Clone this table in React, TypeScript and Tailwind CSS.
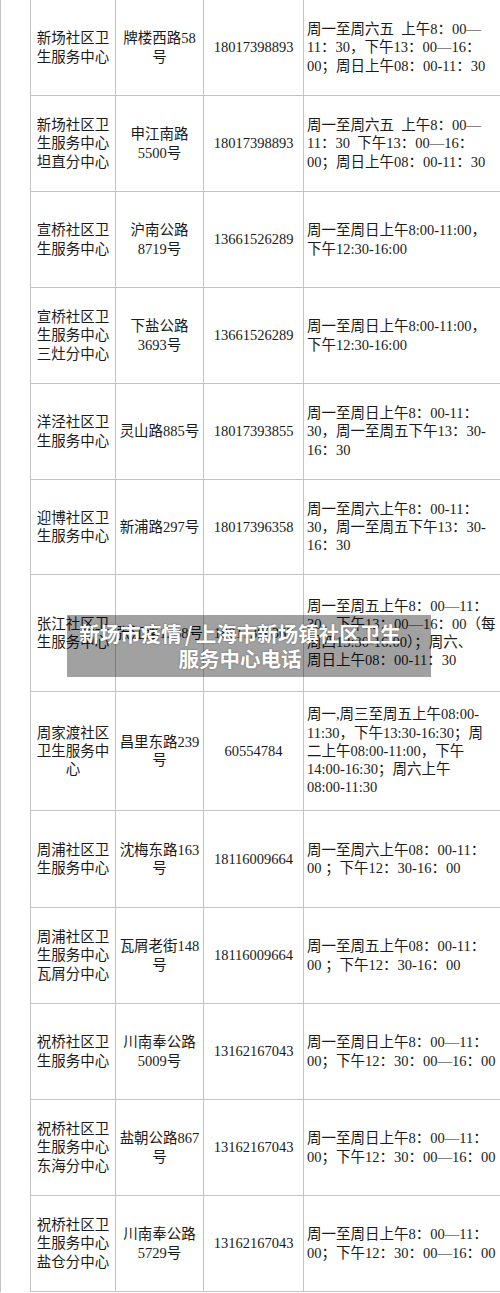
import React from "react";

type Row = {
  h: string;
  name: string[];
  addr: string[];
  phone: string;
  hours: string[];
};

const H1 = ["周一至周日上午8:00-11:00，", "下午12:30-16:00"];
const ZQ = ["周一至周日上午8：00—11：", "00；下午12：30：00—16：00"];

const rows: Row[] = [
  {
    h: "h-[96px]",
    name: ["新场社区卫", "生服务中心"],
    addr: ["牌楼西路58", "号"],
    phone: "18017398893",
    hours: ["周一至周六五  上午8：00—", "11：30，下午13：00—16：", "00；周日上午08：00-11：30"],
  },
  {
    h: "h-[96px]",
    name: ["新场社区卫", "生服务中心", "坦直分中心"],
    addr: ["申江南路", "5500号"],
    phone: "18017398893",
    hours: ["周一至周六五  上午8：00—", "11：30  下午13：00—16：", "00；周日上午08：00-11：30"],
  },
  {
    h: "h-[96px]",
    name: ["宣桥社区卫", "生服务中心"],
    addr: ["沪南公路", "8719号"],
    phone: "13661526289",
    hours: H1,
  },
  {
    h: "h-[96px]",
    name: ["宣桥社区卫", "生服务中心", "三灶分中心"],
    addr: ["下盐公路", "3693号"],
    phone: "13661526289",
    hours: H1,
  },
  {
    h: "h-[96px]",
    name: ["洋泾社区卫", "生服务中心"],
    addr: ["灵山路885号"],
    phone: "18017393855",
    hours: ["周一至周日上午8：00-11：", "30，周一至周五下午13：30-", "16：30"],
  },
  {
    h: "h-[95px]",
    name: ["迎博社区卫", "生服务中心"],
    addr: ["新浦路297号"],
    phone: "18017396358",
    hours: ["周一至周六上午8：00-11：", "30，周一至周五下午13：30-", "16：30"],
  },
  {
    h: "h-[117px]",
    name: ["张江社区卫", "生服务中心"],
    addr: ["张江路1238号"],
    phone: "18017396367",
    hours: [
      "周一至周五上午8：00—11：",
      "30，下午13：00—16：00（每",
      "周四13:30-16:00）；周六、",
      "周日上午08：00-11：30",
    ],
  },
  {
    h: "h-[119px]",
    name: ["周家渡社区", "卫生服务中", "心"],
    addr: ["昌里东路239", "号"],
    phone: "60554784",
    hours: [
      "周一,周三至周五上午08:00-",
      "11:30，下午13:30-16:30；周",
      "二上午08:00-11:00，下午",
      "14:00-16:30；周六上午",
      "08:00-11:30",
    ],
  },
  {
    h: "h-[97px]",
    name: ["周浦社区卫", "生服务中心"],
    addr: ["沈梅东路163", "号"],
    phone: "18116009664",
    hours: ["周一至周六上午08：00-11：", "00 ；下午12：30-16：00"],
  },
  {
    h: "h-[96px]",
    name: ["周浦社区卫", "生服务中心", "瓦屑分中心"],
    addr: ["瓦屑老街148", "号"],
    phone: "18116009664",
    hours: ["周一至周五上午08：00-11：", "00 ；下午12：30-16：00"],
  },
  {
    h: "h-[96px]",
    name: ["祝桥社区卫", "生服务中心"],
    addr: ["川南奉公路", "5009号"],
    phone: "13162167043",
    hours: ZQ,
  },
  {
    h: "h-[96px]",
    name: ["祝桥社区卫", "生服务中心", "东海分中心"],
    addr: ["盐朝公路867", "号"],
    phone: "13162167043",
    hours: ZQ,
  },
  {
    h: "h-[96px]",
    name: ["祝桥社区卫", "生服务中心", "盐仓分中心"],
    addr: ["川南奉公路", "5729号"],
    phone: "13162167043",
    hours: ZQ,
  },
];

function Lines({ lines }: { lines: string[] }) {
  return (
    <>
      {lines.map((l, i) => (
        <div key={i} className="whitespace-pre">
          {l}
        </div>
      ))}
    </>
  );
}

export default function App() {
  return (
    <div
      className="relative w-[500px] h-[1293px] overflow-hidden bg-white text-[#1a1a1a] text-[14.5px] leading-[18.2px]"
      style={{ fontFamily: '"Liberation Serif", "Noto Sans CJK SC", serif' }}
    >
      <div className="flex">
        <div className="w-[31px] shrink-0 border-l border-r border-[#c4c4c4]" />
        <div className="flex flex-col flex-1">
          {rows.map((r, i) => (
            <div
              key={i}
              className={`grid grid-cols-[85px_88px_100px_1fr] border-b border-[#c4c4c4] ${r.h}`}
            >
              <div className="flex flex-col items-center justify-center text-center border-r border-[#c4c4c4]">
                <Lines lines={r.name} />
              </div>
              <div className="flex flex-col items-center justify-center text-center border-r border-[#c4c4c4]">
                <Lines lines={r.addr} />
              </div>
              <div className="flex items-center justify-center border-r border-[#c4c4c4]">
                {r.phone}
              </div>
              <div className="flex flex-col justify-center pl-[3px] overflow-hidden">
                <Lines lines={r.hours} />
              </div>
            </div>
          ))}
        </div>
      </div>

      <div className="absolute left-[67px] top-[615px] w-[364px] h-[62px] bg-[rgba(0,0,0,0.37)] flex items-center justify-center pr-[18px]">
        <div
          className="text-white font-bold text-[20.5px] leading-[25px] text-center"
          style={{
            fontFamily: '"Noto Sans CJK SC", sans-serif',
            textShadow: "0 0 2px rgba(0,0,0,0.4)",
          }}
        >
          <div>
            新场市疫情<span className="mx-[3px]">/</span>上海市新场镇社区卫生
          </div>
          <div>服务中心电话</div>
        </div>
      </div>
    </div>
  );
}
